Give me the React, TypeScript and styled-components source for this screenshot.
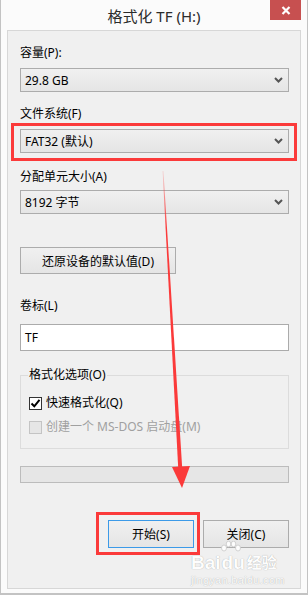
import React from 'react';
import styled, { createGlobalStyle, css } from 'styled-components';

const GlobalStyle = createGlobalStyle`
  html, body {
    margin: 0;
    padding: 0;
    background: #ffffff;
  }
  body {
    font-family: "Segoe UI", "Noto Sans", "Noto Sans CJK SC", sans-serif;
    font-size: 12px;
    color: #000;
  }
`;

const Window = styled.div`
  position: relative;
  width: 308px;
  height: 595px;
  box-sizing: border-box;
  background: #fbfbfb;
  border: 1px solid #c3c3c3;
  border-top: none;
  border-bottom-width: 2px;
  display: flex;
  flex-direction: column;
  overflow: hidden;
`;

const TitleBar = styled.div`
  position: relative;
  height: 30px;
  display: flex;
  align-items: center;
  justify-content: center;
  flex-shrink: 0;
`;

const Title = styled.div`
  font-size: 15px;
  color: #2b2b2b;
  line-height: 20px;
  margin-top: 2px;
`;

const CloseButton = styled.div`
  position: absolute;
  top: 0;
  right: 6px;
  width: 31px;
  height: 20px;
  background: #c75050;
  display: flex;
  align-items: center;
  justify-content: center;
`;

const Panel = styled.div`
  flex: 1;
  margin: 0 6px 4px 6px;
  background: #f0f0f0;
  border: 1px solid #d7d7d7;
  padding: 0 11px 0 12px;
  display: flex;
  flex-direction: column;
`;

const Label = styled.div<{ $top: number }>`
  margin-top: ${p => p.$top}px;
  line-height: 16px;
  height: 16px;
  white-space: nowrap;
`;

const redFrame = css`
  content: '';
  position: absolute;
  border: 3px solid #fb3a3a;
  pointer-events: none;
`;

const Highlight = styled.div<{ $top: number; $l: number; $r: number; $t: number; $b: number }>`
  position: relative;
  margin-top: ${p => p.$top}px;
  &::after {
    ${redFrame};
    left: ${p => -p.$l}px;
    right: ${p => -p.$r}px;
    top: ${p => -p.$t}px;
    bottom: ${p => -p.$b}px;
  }
`;

const Select = styled.div<{ $top?: number }>`
  margin-top: ${p => p.$top ?? 0}px;
  height: 24px;
  box-sizing: border-box;
  border: 1px solid #acacac;
  background: linear-gradient(#f0f0f0, #e5e5e5);
  display: flex;
  align-items: center;
  justify-content: space-between;
  padding: 0 5px 0 4px;
  white-space: nowrap;
`;

const Button = styled.div<{ $top?: number; $width: number; $default?: boolean }>`
  margin-top: ${p => p.$top ?? 0}px;
  width: ${p => p.$width}px;
  box-sizing: border-box;
  border: 1px solid ${p => (p.$default ? '#3c9ae8' : '#acacac')};
  background: linear-gradient(#f0f0f0, #e5e5e5);
  display: flex;
  align-items: center;
  justify-content: center;
  white-space: nowrap;
`;

const ResetButton = styled(Button)`
  height: 27px;
`;

const ActionButton = styled(Button)`
  height: 28px;
`;

const TextInput = styled.div<{ $top: number }>`
  margin-top: ${p => p.$top}px;
  height: 27px;
  box-sizing: border-box;
  border: 1px solid #ababab;
  background: #fff;
  display: flex;
  align-items: center;
  padding-left: 4px;
`;

const Group = styled.fieldset`
  margin: 16px 0 0 0;
  padding: 0 0 13px 7px;
  border: 1px solid #dcdcdc;
  min-width: 0;
`;

const Legend = styled.legend`
  padding: 0 1px;
  line-height: 16px;
`;

const CheckRow = styled.div<{ $top: number; $disabled?: boolean }>`
  margin-top: ${p => p.$top}px;
  display: flex;
  align-items: center;
  gap: 4px;
  line-height: 16px;
  color: ${p => (p.$disabled ? '#a0a0a0' : '#000')};
`;

const Box = styled.div<{ $disabled?: boolean }>`
  width: 13px;
  height: 13px;
  box-sizing: border-box;
  border: 1px solid ${p => (p.$disabled ? '#c4c4c4' : '#333')};
  background: ${p => (p.$disabled ? '#e6e6e6' : '#fff')};
  display: flex;
  align-items: center;
  justify-content: center;
  margin-left: 1px;
`;

const Progress = styled.div`
  margin-top: 17px;
  height: 17px;
  box-sizing: border-box;
  border: 1px solid #bcbcbc;
  background: #e6e6e6;
`;

const ButtonRow = styled.div`
  margin-top: 37px;
  display: flex;
  justify-content: flex-end;
  gap: 9px;
`;

const Overlay = styled.svg`
  position: absolute;
  left: 0;
  top: 0;
  pointer-events: none;
`;

const Watermark = styled.div`
  position: absolute;
  left: 190px;
  top: 541px;
  color: #fdfdfd;
  text-shadow: 0 0 1px rgba(0, 0, 0, 0.35);
  font-family: "Liberation Sans", "Noto Sans CJK SC", sans-serif;
  pointer-events: none;
`;

const WatermarkBrand = styled.div`
  display: flex;
  align-items: flex-end;
  font-size: 19px;
  font-weight: bold;
  line-height: 22px;
  height: 33px;
`;

const WatermarkUrl = styled.div`
  font-size: 11px;
  line-height: 12px;
  letter-spacing: 0.3px;
`;

const Chevron = () => (
  <svg width="9" height="6" viewBox="0 0 9 6">
    <path d="M1 1 L4.5 4.5 L8 1" fill="none" stroke="#555" strokeWidth="2" />
  </svg>
);

const Paw = () => (
  <svg width="22" height="15" viewBox="0 0 22 15" style={{ margin: '0 -20px 18px -1px' }}>
    <g fill="#fdfdfd" stroke="#c8c8c8" strokeWidth="0.8">
      <ellipse cx="4" cy="7" rx="2.5" ry="3" />
      <ellipse cx="8.5" cy="3" rx="2.3" ry="2.8" />
      <ellipse cx="13.5" cy="3" rx="2.3" ry="2.8" />
      <ellipse cx="18" cy="7" rx="2.5" ry="3" />
    </g>
  </svg>
);

const App: React.FC = () => {
  return (
    <>
      <GlobalStyle />
      <Window>
        <TitleBar>
          <Title>格式化 TF (H:)</Title>
          <CloseButton>
            <svg width="10" height="9" viewBox="0 0 10 9">
              <path d="M1.5 1 L8.5 8 M8.5 1 L1.5 8" stroke="#fff" strokeWidth="2.2" />
            </svg>
          </CloseButton>
        </TitleBar>
        <Panel>
          <Label $top={14}>容量(P):</Label>
          <Select $top={7}>
            <span>29.8 GB</span>
            <Chevron />
          </Select>

          <Label $top={14}>文件系统(F)</Label>
          <Highlight $top={7} $l={9} $r={8} $t={6} $b={8}>
            <Select>
              <span>FAT32 (默认)</span>
              <Chevron />
            </Select>
          </Highlight>

          <Label $top={16}>分配单元大小(A)</Label>
          <Select $top={5}>
            <span>8192 字节</span>
            <Chevron />
          </Select>

          <ResetButton $top={33} $width={156}>还原设备的默认值(D)</ResetButton>

          <Label $top={24}>卷标(L)</Label>
          <TextInput $top={10}>TF</TextInput>

          <Group>
            <Legend>格式化选项(O)</Legend>
            <CheckRow $top={12}>
              <Box>
                <svg width="11" height="11" viewBox="0 0 11 11">
                  <path d="M1.5 5.5 L4.3 8.3 L9.5 1.8" fill="none" stroke="#000" strokeWidth="2" />
                </svg>
              </Box>
              <span>快速格式化(Q)</span>
            </CheckRow>
            <CheckRow $top={8} $disabled>
              <Box $disabled />
              <span>创建一个 MS-DOS 启动盘(M)</span>
            </CheckRow>
          </Group>

          <Progress />

          <ButtonRow>
            <Highlight $top={0} $l={12} $r={6} $t={8} $b={7}>
              <ActionButton $width={86} $default>开始(S)</ActionButton>
            </Highlight>
            <ActionButton $width={86}>关闭(C)</ActionButton>
          </ButtonRow>
        </Panel>

        <Watermark>
          <WatermarkBrand>
            <span>Bai</span>
            <Paw />
            <span>du</span>
            <span style={{ fontSize: 15, marginLeft: 2 }}>经验</span>
          </WatermarkBrand>
          <WatermarkUrl>jingyan.baidu.com</WatermarkUrl>
        </Watermark>

        <Overlay width="308" height="596" viewBox="0 0 308 596">
          <defs>
            <linearGradient id="shaft" x1="0" y1="170" x2="0" y2="230" gradientUnits="userSpaceOnUse">
              <stop offset="0" stopColor="#fb3a3a" stopOpacity="0.15" />
              <stop offset="1" stopColor="#fb3a3a" stopOpacity="1" />
            </linearGradient>
          </defs>
          <polygon points="161.6,171 162.4,171 181.2,468 177.2,468" fill="url(#shaft)" />
          <polygon points="171,467 189,466 181,488" fill="#fb3a3a" />
        </Overlay>
      </Window>
    </>
  );
};

export default App;
